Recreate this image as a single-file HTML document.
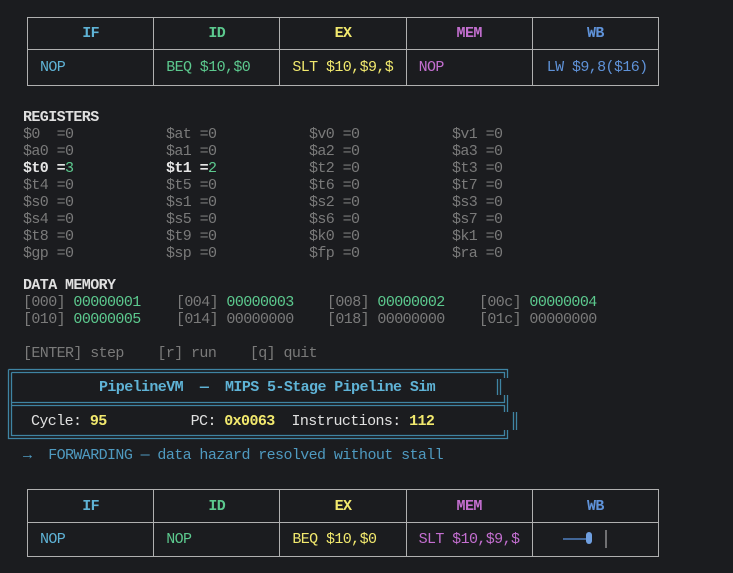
<!DOCTYPE html>
<html><head><style>
html,body{margin:0;padding:0;background:#1b1c1f;width:733px;height:573px;overflow:hidden}
body{font-family:"Liberation Mono",monospace;font-size:15px;letter-spacing:-0.6px;color:#7a7a7a;position:relative}
.a{position:absolute;white-space:pre;line-height:17px}
table{position:absolute;border-collapse:collapse;left:27px;width:632px;table-layout:fixed}
td{border:1px solid #b0b0b0;padding:0 0 0 12px;white-space:pre;overflow:hidden}
th{border:1px solid #b0b0b0;font-weight:bold;text-align:center}
.c{color:#5fb3d6}.g{color:#5cc98e}.y{color:#f2e96e}.m{color:#c46fd0}.b{color:#5f92d8}
.w{color:#e6e6e6;font-weight:bold}.h{color:#e0e0e0;font-weight:bold}
.gy{color:#7a7a7a}.gr{color:#5cc98e}
</style></head><body>
<table style="top:17px"><tr style="height:32px"><th class="c">IF</th><th class="g">ID</th><th class="y">EX</th><th class="m">MEM</th><th class="b">WB</th></tr>
<tr style="height:36px"><td class="c">NOP</td><td class="g">BEQ $10,$0</td><td class="y">SLT $10,$9,$</td><td class="m">NOP</td><td class="b" style="padding-left:14px">LW $9,8($16)</td></tr></table>

<div class="a h" style="left:23px;top:109px">REGISTERS</div>
<div class="a" style="left:23px;top:126px">$0  =0</div><div class="a" style="left:166px;top:126px">$at =0</div><div class="a" style="left:309px;top:126px">$v0 =0</div><div class="a" style="left:452px;top:126px">$v1 =0</div>
<div class="a" style="left:23px;top:143px">$a0 =0</div><div class="a" style="left:166px;top:143px">$a1 =0</div><div class="a" style="left:309px;top:143px">$a2 =0</div><div class="a" style="left:452px;top:143px">$a3 =0</div>
<div class="a" style="left:23px;top:160px"><span class="w">$t0 =</span><span class="gr">3</span></div><div class="a" style="left:166px;top:160px"><span class="w">$t1 =</span><span class="gr">2</span></div><div class="a" style="left:309px;top:160px">$t2 =0</div><div class="a" style="left:452px;top:160px">$t3 =0</div>
<div class="a" style="left:23px;top:177px">$t4 =0</div><div class="a" style="left:166px;top:177px">$t5 =0</div><div class="a" style="left:309px;top:177px">$t6 =0</div><div class="a" style="left:452px;top:177px">$t7 =0</div>
<div class="a" style="left:23px;top:194px">$s0 =0</div><div class="a" style="left:166px;top:194px">$s1 =0</div><div class="a" style="left:309px;top:194px">$s2 =0</div><div class="a" style="left:452px;top:194px">$s3 =0</div>
<div class="a" style="left:23px;top:211px">$s4 =0</div><div class="a" style="left:166px;top:211px">$s5 =0</div><div class="a" style="left:309px;top:211px">$s6 =0</div><div class="a" style="left:452px;top:211px">$s7 =0</div>
<div class="a" style="left:23px;top:228px">$t8 =0</div><div class="a" style="left:166px;top:228px">$t9 =0</div><div class="a" style="left:309px;top:228px">$k0 =0</div><div class="a" style="left:452px;top:228px">$k1 =0</div>
<div class="a" style="left:23px;top:245px">$gp =0</div><div class="a" style="left:166px;top:245px">$sp =0</div><div class="a" style="left:309px;top:245px">$fp =0</div><div class="a" style="left:452px;top:245px">$ra =0</div>

<div class="a h" style="left:23px;top:277px">DATA MEMORY</div>
<div class="a" style="left:23px;top:294px">[000] <span class="gr">00000001</span></div><div class="a" style="left:176px;top:294px">[004] <span class="gr">00000003</span></div><div class="a" style="left:327px;top:294px">[008] <span class="gr">00000002</span></div><div class="a" style="left:479px;top:294px">[00c] <span class="gr">00000004</span></div>
<div class="a" style="left:23px;top:311px">[010] <span class="gr">00000005</span></div><div class="a" style="left:176px;top:311px">[014] 00000000</div><div class="a" style="left:327px;top:311px">[018] 00000000</div><div class="a" style="left:479px;top:311px">[01c] 00000000</div>

<div class="a" style="left:23px;top:345px">[ENTER] step    [r] run    [q] quit</div>

<svg style="position:absolute;left:0;top:0" width="733" height="573">
<g stroke="#3f84a3" stroke-width="1.3" fill="none">
<path d="M8.5 369.5V438.5H507.5V430M8.5 369.5H507.5V378M507.5 395V412"/>
<path d="M11.5 372.5V435.5H504.5V430M11.5 372.5H504.5V378M504.5 395V402.5H11.5M11.5 405.5H504.5V412"/>
<path d="M497.5 379V395M500.5 379V395M513.5 412V430M516.5 412V430"/>
</g>
<g stroke="#4f7fbf" stroke-width="1.5"><path d="M563 539H588"/></g>
<rect x="586" y="532" width="6" height="12" rx="3" fill="#6f9fe0"/>
<path d="M606 530V548" stroke="#aaa" stroke-width="1.2"/>
</svg>
<div class="a c" style="left:99px;top:379px;font-weight:bold">PipelineVM  —  MIPS 5-Stage Pipeline Sim</div>
<div class="a" style="left:31px;top:413px;color:#e0e0e0">Cycle: <b class="y">95</b>          PC: <b class="y">0x0063</b>  Instructions: <b class="y">112</b></div>
<div class="a" style="left:23px;top:447px;color:#4f9ac0">→  FORWARDING — data hazard resolved without stall</div>

<table style="top:489px"><tr style="height:33px"><th class="c">IF</th><th class="g">ID</th><th class="y">EX</th><th class="m">MEM</th><th class="b">WB</th></tr>
<tr style="height:34px"><td class="c">NOP</td><td class="g">NOP</td><td class="y">BEQ $10,$0</td><td class="m">SLT $10,$9,$</td><td></td></tr></table>
</body></html>
